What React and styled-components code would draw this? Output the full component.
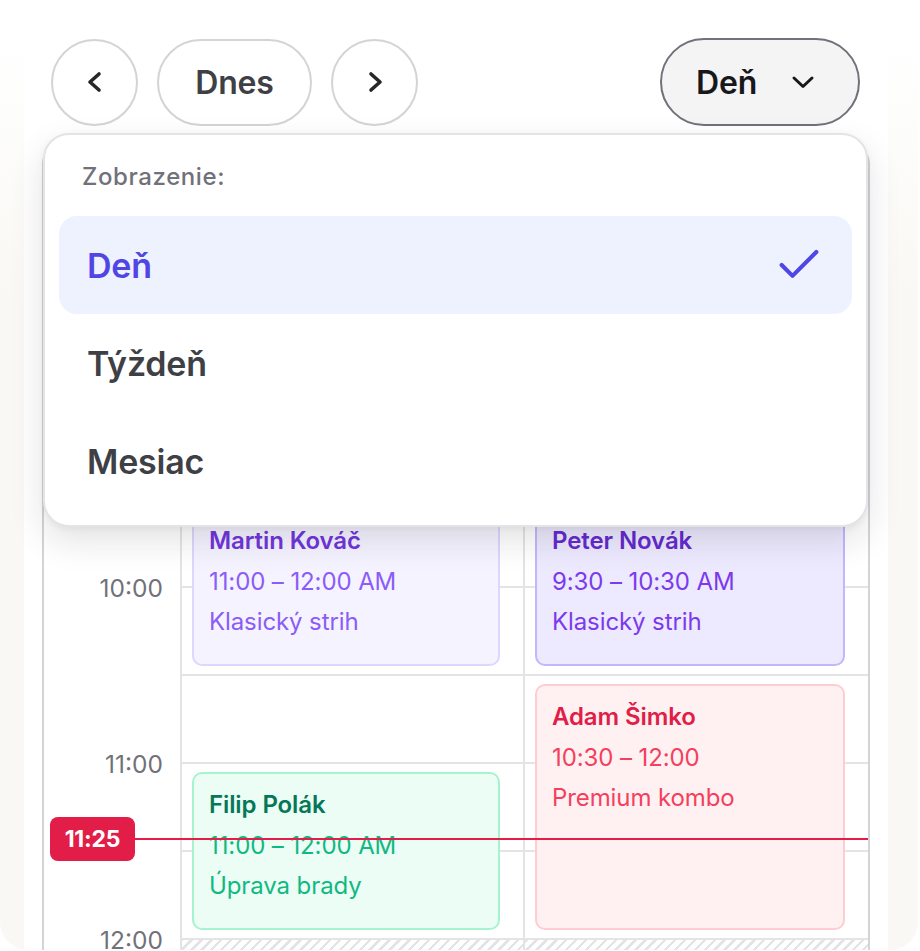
import React from 'react';
import styled, { createGlobalStyle, css } from 'styled-components';
import { Check } from 'lucide-react';

const GlobalStyle = createGlobalStyle`
  *, *::before, *::after { box-sizing: border-box; }
  html, body { margin: 0; padding: 0; background: #ffffff; }
  body {
    font-family: Inter, "Noto Sans", "Liberation Sans", sans-serif;
    -webkit-font-smoothing: antialiased;
  }
  button { font-family: inherit; }
`;

const SLOT = 88; // px per half hour
const DAY_START = 8 * 60;
const pxFor = (min) => ((min - DAY_START) * SLOT) / 30;

const TONES = {
  lavender: { bg: '#f5f3ff', border: '#ddd6fe', title: '#7035dd', text: '#8b5cf6' },
  violet: { bg: '#ede9fe', border: '#c4b5fd', title: '#6429cf', text: '#7c3aed' },
  rose: { bg: '#fff1f2', border: '#fecdd3', title: '#e11d48', text: '#f43f5e' },
  mint: { bg: '#ecfdf5', border: '#a7f3d0', title: '#047857', text: '#10b981' },
};

const EVENTS = [
  { id: 1, col: 0, name: 'Martin Kováč', time: '11:00 – 12:00 AM', service: 'Klasický strih', start: 570, end: 630, tone: 'lavender' },
  { id: 2, col: 1, name: 'Peter Novák', time: '9:30 – 10:30 AM', service: 'Klasický strih', start: 570, end: 630, tone: 'violet' },
  { id: 3, col: 1, name: 'Adam Šimko', time: '10:30 – 12:00', service: 'Premium kombo', start: 630, end: 720, tone: 'rose' },
  { id: 4, col: 0, name: 'Filip Polák', time: '11:00 – 12:00 AM', service: 'Úprava brady', start: 660, end: 720, tone: 'mint' },
];

const HOURS = ['8:00', '9:00', '10:00', '11:00', '12:00'];
const OPEN_SLOTS = 8; // 8:00 - 12:00
const CLOSED_SLOTS = 2;
const NOW_MIN = 11 * 60 + 25;

const VIEWS = [
  { id: 'day', label: 'Deň' },
  { id: 'week', label: 'Týždeň' },
  { id: 'month', label: 'Mesiac' },
];

/* ---------- layout ---------- */

const Frame = styled.div`
  width: 918px;
  height: 950px;
  padding: 0 30px 0 24px;
  border-radius: 0 0 28px 28px;
  background: linear-gradient(180deg, #ffffff 0px, #ffffff 40px, #f9f8f4 300px);
  overflow: hidden;
`;

const Sheet = styled.main`
  position: relative;
  height: 100%;
  display: flex;
  flex-direction: column;
  background: #ffffff;
`;

const Toolbar = styled.header`
  position: relative;
  display: flex;
  align-items: center;
  justify-content: space-between;
  padding: 38px 28px 0 27px;
`;

const NavGroup = styled.div`
  display: flex;
  align-items: center;
  gap: 19px;
`;

const pill = css`
  height: 87px;
  display: inline-flex;
  align-items: center;
  justify-content: center;
  border-radius: 44px;
  font-size: 32px;
  font-weight: 600;
  letter-spacing: -0.2px;
  cursor: pointer;
`;

const RoundButton = styled.button`
  ${pill};
  width: ${(p) => p.$w || 87}px;
  padding: 0;
  background: #ffffff;
  border: 2px solid #d4d4d8;
  color: #3f3f46;
`;

const ViewTrigger = styled.button`
  ${pill};
  width: 200px;
  height: 88px;
  justify-content: flex-start;
  gap: 34px;
  padding: 0 0 0 34px;
  background: #f4f4f5;
  border: 2.5px solid #71717a;
  color: #18181b;
`;

const Menu = styled.div`
  position: absolute;
  top: 133px;
  left: 19px;
  width: 825px;
  z-index: 20;
  padding: 27px 14px 15px;
  background: #ffffff;
  border: 2px solid #e4e4e7;
  border-radius: 26px;
  box-shadow: 0 14px 34px rgba(24, 24, 27, 0.12), 0 2px 6px rgba(24, 24, 27, 0.05);
`;

const MenuLabel = styled.div`
  padding-left: 23px;
  margin-bottom: 24px;
  font-size: 24px;
  line-height: 30px;
  font-weight: 500;
  color: #71717a;
  letter-spacing: 0.6px;
`;

const MenuItem = styled.div`
  height: 98px;
  display: flex;
  align-items: center;
  justify-content: space-between;
  padding: 0 27px 0 28px;
  border-radius: 18px;
  font-size: 34px;
  font-weight: 600;
  letter-spacing: -0.2px;
  color: ${(p) => (p.$active ? '#4f46e5' : '#3f3f46')};
  background: ${(p) => (p.$active ? '#eef2ff' : 'transparent')};
`;

const Card = styled.section`
  position: relative;
  flex: 1;
  margin: 18px 18px 0;
  border: 2px solid #d4d4d8;
  border-bottom: none;
  border-radius: 20px 20px 0 0;
  overflow: hidden;
`;

const gridCols = css`
  display: grid;
  grid-template-columns: 138px 1fr 1fr;
`;

const HeadRow = styled.div`
  ${gridCols};
  height: 88px;
  border-bottom: 2px solid #e4e4e7;
`;

const HeadCell = styled.div`
  border-right: ${(p) => (p.$last ? 'none' : '2px solid #e4e4e7')};
`;

const Body = styled.div`
  position: relative;
  ${gridCols};
`;

const TimeColumn = styled.div`
  display: flex;
  flex-direction: column;
  border-right: 2px solid #e4e4e7;
`;

const HourCell = styled.div`
  height: ${SLOT * 2}px;
  display: flex;
  justify-content: flex-end;
  padding-right: 17px;
`;

const HourLabel = styled.span`
  margin-top: -13px;
  height: 30px;
  font-size: 24.5px;
  line-height: 30px;
  color: #71717a;
  letter-spacing: 0px;
`;

const DayColumn = styled.div`
  position: relative;
  display: flex;
  flex-direction: column;
  border-right: ${(p) => (p.$last ? 'none' : '2px solid #e4e4e7')};
`;

const Slot = styled.div`
  height: ${SLOT}px;
  flex-shrink: 0;
  border-top: ${(p) => (p.$first ? 'none' : '2px solid #e4e4e7')};
  ${(p) =>
    p.$closed &&
    css`
      background: repeating-linear-gradient(
        -45deg,
        #e4e4e7 0px,
        #e4e4e7 2.4px,
        #ffffff 2.4px,
        #ffffff 7px
      );
    `}
`;

const EventCard = styled.article`
  position: absolute;
  left: 10px;
  right: 23px;
  padding: 11px 15px 8px;
  border-radius: 10px;
  border: 2px solid ${(p) => TONES[p.$tone].border};
  background: ${(p) => TONES[p.$tone].bg};
  overflow: hidden;
`;

const EventTitle = styled.div`
  font-size: 24px;
  line-height: 40.5px;
  font-weight: 600;
  letter-spacing: -0.1px;
  color: ${(p) => TONES[p.$tone].title};
`;

const EventLine = styled.div`
  font-size: 24px;
  line-height: 40.5px;
  color: ${(p) => TONES[p.$tone].text};
  letter-spacing: -0.1px;
`;

const NowIndicator = styled.div`
  position: absolute;
  left: 6px;
  right: 0;
  height: 44px;
  display: flex;
  align-items: center;
  z-index: 5;
  pointer-events: none;
`;

const NowBadge = styled.span`
  width: 85px;
  height: 44px;
  flex-shrink: 0;
  display: flex;
  align-items: center;
  justify-content: center;
  border-radius: 8px;
  background: #e11d48;
  color: #ffffff;
  font-size: 23px;
  font-weight: 700;
  letter-spacing: -0.2px;
`;

const NowLine = styled.span`
  flex: 1;
  height: 2px;
  background: #e11d48;
`;

/* ---------- icons ---------- */

const ChevronLeft = () => (
  <svg width="24" height="28" viewBox="0 0 24 28" fill="none" stroke="#27272a" strokeWidth="3.6" strokeLinecap="round" strokeLinejoin="round">
    <polyline points="16,6 7,14 16,22" />
  </svg>
);

const ChevronRight = () => (
  <svg width="24" height="28" viewBox="0 0 24 28" fill="none" stroke="#27272a" strokeWidth="3.6" strokeLinecap="round" strokeLinejoin="round">
    <polyline points="8,6 17,14 8,22" />
  </svg>
);

const ChevronDown = () => (
  <svg width="24" height="24" viewBox="0 0 24 24" fill="none" stroke="#18181b" strokeWidth="3" strokeLinecap="round" strokeLinejoin="round">
    <polyline points="3,8 12,16.5 21,8" />
  </svg>
);

/* ---------- app ---------- */

export default function App() {
  const nowTop = pxFor(NOW_MIN) + 4 - 22;

  return (
    <>
      <GlobalStyle />
      <Frame>
        <Sheet>
          <Toolbar>
            <NavGroup>
              <RoundButton aria-label="Predchádzajúci">
                <ChevronLeft />
              </RoundButton>
              <RoundButton $w={155}>Dnes</RoundButton>
              <RoundButton aria-label="Nasledujúci">
                <ChevronRight />
              </RoundButton>
            </NavGroup>
            <ViewTrigger>
              <span>Deň</span>
              <ChevronDown />
            </ViewTrigger>

            <Menu role="menu">
              <MenuLabel>Zobrazenie:</MenuLabel>
              {VIEWS.map((v) => (
                <MenuItem key={v.id} $active={v.id === 'day'} role="menuitem">
                  <span>{v.label}</span>
                  {v.id === 'day' && <Check size={52} strokeWidth={1.9} color="#4f46e5" />}
                </MenuItem>
              ))}
            </Menu>
          </Toolbar>

          <Card>
            <HeadRow>
              <HeadCell />
              <HeadCell />
              <HeadCell $last />
            </HeadRow>
            <Body>
              <TimeColumn>
                {HOURS.map((h) => (
                  <HourCell key={h}>
                    <HourLabel>{h}</HourLabel>
                  </HourCell>
                ))}
              </TimeColumn>

              {[0, 1].map((col) => (
                <DayColumn key={col} $last={col === 1}>
                  {Array.from({ length: OPEN_SLOTS }).map((_, i) => (
                    <Slot key={i} $first={i === 0} />
                  ))}
                  {Array.from({ length: CLOSED_SLOTS }).map((_, i) => (
                    <Slot key={`c${i}`} $closed />
                  ))}
                  {EVENTS.filter((e) => e.col === col).map((e) => (
                    <EventCard
                      key={e.id}
                      $tone={e.tone}
                      style={{ top: pxFor(e.start) + 10, height: pxFor(e.end) - pxFor(e.start) - 18 }}
                    >
                      <EventTitle $tone={e.tone}>{e.name}</EventTitle>
                      <EventLine $tone={e.tone}>{e.time}</EventLine>
                      <EventLine $tone={e.tone}>{e.service}</EventLine>
                    </EventCard>
                  ))}
                </DayColumn>
              ))}

              <NowIndicator style={{ top: nowTop }}>
                <NowBadge>11:25</NowBadge>
                <NowLine />
              </NowIndicator>
            </Body>
          </Card>
        </Sheet>
      </Frame>
    </>
  );
}
